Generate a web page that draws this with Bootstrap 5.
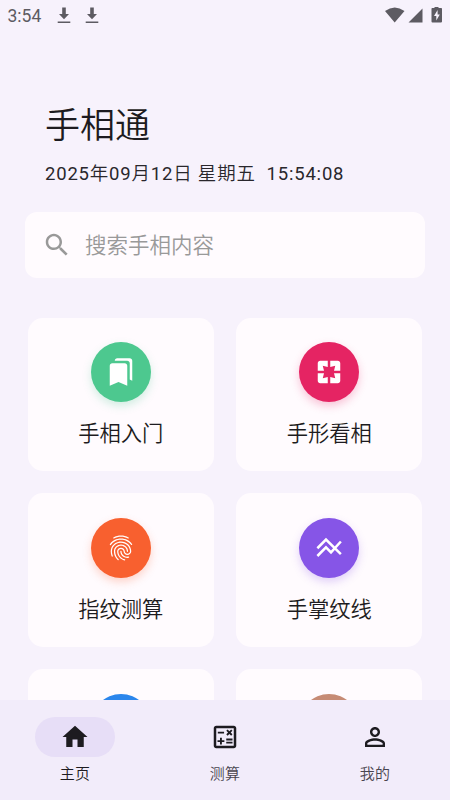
<!DOCTYPE html>
<html lang="zh-CN">
<head>
<meta charset="utf-8">
<meta name="viewport" content="width=device-width, initial-scale=1">
<title>手相通</title>
<link href="https://cdn.jsdelivr.net/npm/bootstrap@5.3.0/dist/css/bootstrap.min.css" rel="stylesheet">
<style>
body{background:#f7f2fc;color:#1d1b20;font-family:Roboto,"Noto Sans CJK SC DemiLight","Noto Sans CJK SC",sans-serif;font-weight:400}
.screen{height:800px;max-width:450px}
.status{height:32px;color:#5d5b62;padding:0 7px 0 7.5px;font-size:17.5px}
.status .download{margin-left:13.5px}
.intro{padding:70px 45px 0}
.app-title{font-size:35px;line-height:50px;font-weight:350}
.clock{font-size:18.5px;line-height:28px;letter-spacing:.8px;margin-top:7.5px;white-space:pre;color:#29272c}
.search{height:66px;margin:24px 25px 0;padding:0 20px 0 17px;border-radius:12px;background:#fffbfe;color:#999}
.search input{color:#999;font-size:21.5px;font-weight:350;margin:4px 0 0 13px}
.search input::placeholder{color:#999;opacity:1}
.tiles{margin:40px 27.6px 0;display:grid;grid-template-columns:1fr 1fr;gap:22.7px 22.2px}
.tile{height:153.3px;border-radius:15px;background:#fffbfe;padding-top:24.3px}
.disc{width:60px;height:60px;color:#fff;flex:none}
.tile-name{font-size:21.3px;line-height:30px;margin-top:17px;font-weight:350}
.green{background:#4dc88f;box-shadow:0 4px 8px #4dc88f40}
.pink{background:#e52463;box-shadow:0 4px 8px #e5246340}
.orange{background:#f8602f;box-shadow:0 4px 8px #f8602f40}
.violet{background:#8655e7;box-shadow:0 4px 8px #8655e740}
.blue{background:#2b86ec}
.brown{background:#c68b75}
.tabs{height:100px;background:#f2ecfa;padding-top:17px;font-size:15px}
.tabs .tab{color:#49454f;width:150px}
.tabs .tab.active{color:#1d1b20}
.pill{width:80px;height:40px;color:#1d1b20}
.active .pill{background:#e7def7}
.tab-name{line-height:22px;margin-top:6px;letter-spacing:.3px}
svg{display:block;fill:currentColor;flex:none}
</style>
</head>
<body>
<div class="screen d-flex flex-column overflow-hidden mx-auto">
  <header class="status d-flex align-items-center justify-content-between flex-shrink-0">
    <div class="d-flex align-items-center">
      <span>3:54</span>
      <svg class="ms-3" width="14" height="18" viewBox="0 0 14 18"><path d="M5.200 .5h3.600v6.500H12L7 12.200 2 7h3.200zM.7 14.500h12.600V16H.7z"/></svg>
      <svg class="download" width="14" height="18" viewBox="0 0 14 18"><path d="M5.200 .5h3.600v6.500H12L7 12.200 2 7h3.200zM.7 14.500h12.600V16H.7z"/></svg>
    </div>
    <svg width="58" height="18" viewBox="0 0 58 18"><path d="M0 4Q9.700-3 19.500 4L9.700 15.500zM37.500 1.500v14H23.500zM49.500-.5h4V1h2.700q.8 0 .8.800V14.500q0 1-1 1h-8.500q-1 0-1-1V1.800q0-.8.8-.8h2.200z"/><path d="M52.600 3L49 9h2.300v4.500l3.500-6h-2.200z" fill="#f7f2fc"/></svg>
  </header>
  <main class="flex-grow-1 overflow-hidden">
    <section class="intro">
      <h1 class="app-title mb-0">手相通</h1>
      <div class="clock">2025年09月12日 星期五  15:54:08</div>
    </section>
    <div class="search d-flex align-items-center">
      <svg width="30" height="30" viewBox="0 0 24 24"><path d="M15.500 14h-.79l-.28-.27C15.410 12.590 16 11.110 16 9.500 16 5.910 13.090 3 9.500 3S3 5.910 3 9.500 5.910 16 9.500 16c1.610 0 3.090-.59 4.230-1.570l.27.28v.79l5 4.990L20.490 19l-4.990-5zm-6 0C7.010 14 5 11.990 5 9.500S7.010 5 9.500 5 14 7.010 14 9.500 11.990 14 9.500 14z"/></svg>
      <input class="form-control-plaintext p-0" type="text" placeholder="搜索手相内容" aria-label="搜索手相内容">
    </div>
    <section class="tiles">
      <div class="tile d-flex flex-column align-items-center">
        <div class="disc green rounded-circle d-flex align-items-center justify-content-center"><svg width="30" height="30" viewBox="0 0 24 24"><path d="M19 18l2 1V3c0-1.100-.9-2-2-2H8.990C7.890 1 7 1.900 7 3h10c1.100 0 2 .9 2 2v13zM15 5H5c-1.100 0-2 .9-2 2v16l7-3 7 3V7c0-1.100-.9-2-2-2z"/></svg></div>
        <div class="tile-name">手相入门</div>
      </div>
      <div class="tile d-flex flex-column align-items-center">
        <div class="disc pink rounded-circle d-flex align-items-center justify-content-center"><svg width="30" height="30" viewBox="0 0 24 24"><path d="M3 5v6h5L7 7l4 1V3H5c-1.100 0-2 .9-2 2zm5 8H3v6c0 1.100.9 2 2 2h6v-5l-4 1 1-4zm9 4l-4-1v5h6c1.100 0 2-.9 2-2v-6h-5l1 4zm2-14h-6v5l4-1-1 4h5V5c0-1.100-.9-2-2-2z"/></svg></div>
        <div class="tile-name">手形看相</div>
      </div>
      <div class="tile d-flex flex-column align-items-center">
        <div class="disc orange rounded-circle d-flex align-items-center justify-content-center"><svg width="30" height="30" viewBox="0 0 24 24"><path d="M17.810 4.470c-.08 0-.16-.02-.23-.06C15.660 3.420 14 3 12.010 3c-1.980 0-3.860.47-5.570 1.410-.24.13-.54.04-.68-.2-.13-.24-.04-.55.2-.68C7.820 2.520 9.860 2 12.010 2c2.130 0 3.990.47 6.030 1.520.25.13.34.43.21.67-.09.18-.26.28-.44.28zM3.500 9.720c-.1 0-.2-.03-.29-.09-.23-.16-.28-.47-.12-.7.99-1.400 2.250-2.500 3.750-3.270C9.980 4.040 14 4.030 17.150 5.650c1.500.77 2.760 1.860 3.750 3.250.16.22.11.54-.12.7-.23.16-.54.11-.7-.12-.9-1.260-2.040-2.250-3.390-2.940-2.870-1.470-6.540-1.470-9.400.01-1.360.7-2.500 1.700-3.400 2.960-.08.14-.23.21-.39.21zm6.250 12.070c-.13 0-.26-.05-.35-.15-.87-.87-1.340-1.430-2.010-2.640-.69-1.230-1.050-2.730-1.050-4.340 0-2.970 2.540-5.390 5.660-5.390s5.660 2.420 5.660 5.390c0 .28-.22.5-.5.5s-.5-.22-.5-.5c0-2.420-2.090-4.390-4.660-4.390-2.570 0-4.660 1.970-4.660 4.390 0 1.440.32 2.770.93 3.850.64 1.150 1.080 1.640 1.850 2.420.19.2.19.51 0 .71-.11.1-.24.15-.37.15zm7.170-1.850c-1.190 0-2.240-.3-3.100-.89-1.490-1.010-2.380-2.650-2.380-4.390 0-.28.22-.5.5-.5s.5.22.5.5c0 1.410.72 2.740 1.940 3.560.71.48 1.540.71 2.540.71.24 0 .64-.03 1.040-.1.27-.05.53.13.58.41.05.27-.13.53-.41.58-.57.11-1.070.12-1.210.12zM14.910 22c-.04 0-.09-.01-.13-.02-1.590-.44-2.630-1.030-3.720-2.100-1.400-1.390-2.170-3.240-2.170-5.220 0-1.620 1.380-2.940 3.080-2.940 1.700 0 3.080 1.320 3.080 2.940 0 1.070.93 1.940 2.080 1.940s2.080-.87 2.080-1.940c0-3.770-3.250-6.830-7.250-6.830-2.840 0-5.440 1.580-6.610 4.030-.39.81-.59 1.760-.59 2.800 0 .78.07 2.010.67 3.610.1.26-.03.55-.29.64-.26.1-.55-.04-.64-.29-.49-1.310-.73-2.610-.73-3.960 0-1.200.23-2.290.68-3.240 1.330-2.790 4.280-4.600 7.510-4.600 4.550 0 8.250 3.510 8.250 7.830 0 1.620-1.380 2.940-3.080 2.940s-3.080-1.320-3.080-2.940c0-1.070-.93-1.940-2.080-1.940s-2.080.87-2.080 1.940c0 1.710.66 3.310 1.870 4.510.95.94 1.860 1.460 3.270 1.850.27.07.42.35.35.61-.05.23-.26.38-.47.38z"/></svg></div>
        <div class="tile-name">指纹测算</div>
      </div>
      <div class="tile d-flex flex-column align-items-center">
        <div class="disc violet rounded-circle d-flex align-items-center justify-content-center"><svg width="30" height="30" viewBox="0 0 24 24"><path fill="none" stroke="currentColor" stroke-width="2" d="M2.700 12.200L9.600 5.200 21.500 16.900M2.700 18.400L9.600 11.500l4 4L21.500 6.800"/></svg></div>
        <div class="tile-name">手掌纹线</div>
      </div>
      <div class="tile d-flex flex-column align-items-center"><div class="disc blue rounded-circle"></div></div>
      <div class="tile d-flex flex-column align-items-center"><div class="disc brown rounded-circle"></div></div>
    </section>
  </main>
  <nav class="tabs d-flex flex-shrink-0">
    <a class="tab active d-flex flex-column align-items-center text-decoration-none" href="#">
      <span class="pill rounded-pill d-flex align-items-center justify-content-center"><svg width="30" height="30" viewBox="0 0 24 24"><path d="M10 20v-6h4v6h5v-8h3L12 3 2 12h3v8z"/></svg></span>
      <span class="tab-name">主页</span>
    </a>
    <a class="tab d-flex flex-column align-items-center text-decoration-none" href="#">
      <span class="pill rounded-pill d-flex align-items-center justify-content-center"><svg width="30" height="30" viewBox="0 0 24 24"><path d="M19 3H5c-1.100 0-2 .9-2 2v14c0 1.100.9 2 2 2h14c1.100 0 2-.9 2-2V5c0-1.100-.9-2-2-2zm0 16H5V5h14v14zM6.250 7.720h5v1.500h-5zM13 15.750h5v1.500h-5zM13 13.250h5v1.500h-5zM8 18h1.500v-2h2v-1.500h-2v-2H8v2H6V16h2zM14.090 10.950l1.410-1.410 1.410 1.410 1.060-1.060-1.410-1.420 1.410-1.410L16.910 6 15.500 7.410 14.090 6l-1.060 1.060 1.410 1.410-1.410 1.420z"/></svg></span>
      <span class="tab-name">测算</span>
    </a>
    <a class="tab d-flex flex-column align-items-center text-decoration-none" href="#">
      <span class="pill rounded-pill d-flex align-items-center justify-content-center"><svg width="30" height="30" viewBox="0 0 24 24"><path d="M12 5.900c1.160 0 2.100.94 2.100 2.100s-.94 2.100-2.100 2.100S9.900 9.160 9.900 8s.94-2.100 2.100-2.100m0 9c2.970 0 6.100 1.460 6.100 2.100v1.100H5.900V17c0-.64 3.130-2.100 6.100-2.100M12 4C9.790 4 8 5.790 8 8s1.790 4 4 4 4-1.790 4-4-1.790-4-4-4zm0 9c-2.670 0-8 1.340-8 4v3h16v-3c0-2.660-5.330-4-8-4z"/></svg></span>
      <span class="tab-name">我的</span>
    </a>
  </nav>
</div>
<script src="https://cdn.jsdelivr.net/npm/bootstrap@5.3.0/dist/js/bootstrap.bundle.min.js"></script>
</body>
</html>
